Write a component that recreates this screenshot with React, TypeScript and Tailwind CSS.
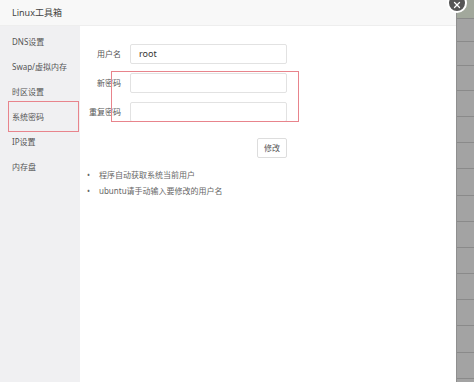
import { X } from 'lucide-react';

const menuItems = ['DNS设置', 'Swap/虚拟内存', '时区设置', '系统密码', 'IP设置', '内存盘'];

const stripRows = [19, 23, 24, 25, 26, 26, 26, 27, 26, 26, 26, 26, 26, 27, 26];

/**
 * Linux toolbox dialog – system password panel
 */
export default function App() {
  const font = { fontFamily: '"Noto Sans", "Noto Sans CJK SC", sans-serif' };

  return (
    <div className="flex w-[474px] h-[382px] overflow-hidden bg-white" style={font}>
      <div className="relative flex flex-col w-[456px] h-full">
        <div className="flex items-center h-[26px] pl-[12px] bg-[#f8f8f8] border-b border-[#eeeeee] text-[9px] text-[#444]">
          Linux工具箱
        </div>

        <div className="absolute left-[447px] top-[-7px] flex items-center justify-center w-[20px] h-[20px] rounded-full bg-[#555] border-2 border-white">
          <X className="w-[10px] h-[10px] mt-[4px] text-white" strokeWidth={3} />
        </div>

        <div className="flex flex-1">
          <div className="w-[80px] bg-[#f0f0f2] pt-[3px]">
            {menuItems.map((item) => (
              <div
                key={item}
                className="relative flex items-center h-[25px] pl-[12px] text-[8px] text-[#555]"
              >
                {item}
                {item === '系统密码' && (
                  <div className="absolute left-[8px] top-[-3px] w-[71px] h-[31px] border border-[#e8848c]" />
                )}
              </div>
            ))}
          </div>

          <div className="relative flex-1 pt-[18px]">
            <div className="w-[207px] flex flex-col">
              {['用户名', '新密码', '重复密码'].map((label, i) => (
                <div key={label} className="flex items-center h-[20px] mb-[9px]">
                  <div className="w-[41px] text-right text-[8px] text-[#555]">{label}</div>
                  <div className="ml-[9px] flex items-center w-[157px] h-[20px] border border-[#e2e2e2] rounded-[2px] pl-[8px] text-[9px] text-[#333]">
                    {i === 0 ? 'root' : ''}
                  </div>
                </div>
              ))}

              <div className="flex justify-end mt-[7px]">
                <div className="flex items-center justify-center w-[30px] h-[20px] border border-[#dddddd] rounded-[2px] text-[8px] text-[#555]">
                  修改
                </div>
              </div>
            </div>

            <ul className="mt-[9px] ml-[7px] text-[8px] text-[#666] leading-[16px]">
              <li className="flex items-center">
                <span className="w-[12px]">•</span>程序自动获取系统当前用户
              </li>
              <li className="flex items-center">
                <span className="w-[12px]">•</span>ubuntu请手动输入要修改的用户名
              </li>
            </ul>

            <div className="absolute left-[31px] top-[45px] w-[188px] h-[51px] border border-[#e8848c]" />
          </div>
        </div>
      </div>

      <div className="flex flex-col w-[18px] h-full bg-[#a3a3a3] border-l border-[#8f8f8f]">
        {stripRows.map((h, i) => (
          <div
            key={i}
            className={`shrink-0 border-b border-[#8a8a8a] ${i === 0 ? 'bg-[#a2a89c]' : ''}`}
            style={{ height: h }}
          />
        ))}
      </div>
    </div>
  );
}
